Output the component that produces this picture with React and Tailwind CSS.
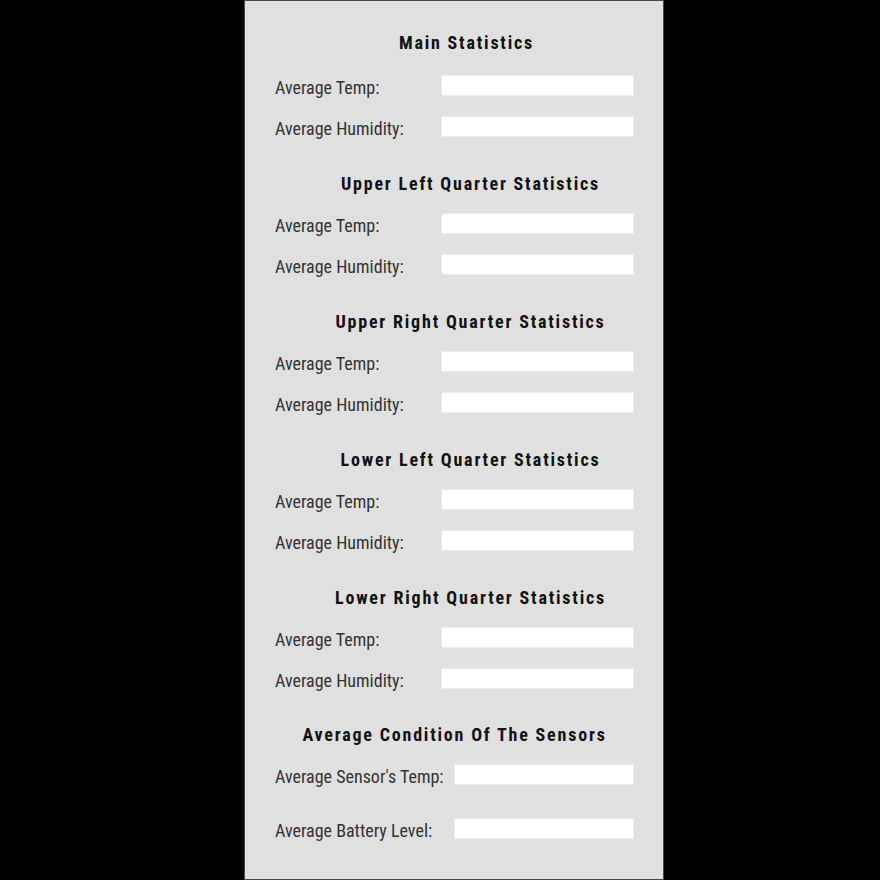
import React from 'react';

const sections = [
  { title: 'Main Statistics', shift: 'pl-[24px]', top: 'mb-[20px]' },
  { title: 'Upper Left Quarter Statistics', shift: 'pl-[32px]', top: 'mb-[17px]' },
  { title: 'Upper Right Quarter Statistics', shift: 'pl-[32px]', top: 'mb-[17px]' },
  { title: 'Lower Left Quarter Statistics', shift: 'pl-[32px]', top: 'mb-[17px]' },
  { title: 'Lower Right Quarter Statistics', shift: 'pl-[32px]', top: 'mb-[17px]' },
];

const Field = ({ label, wide = true }) => (
  <div className="flex items-center justify-between h-[21px]">
    <span className="pt-[4px] text-[18px] text-[#333] font-stretch-condensed leading-none">{label}</span>
    <input
      type="text"
      readOnly
      className={`${wide ? 'w-[193px]' : 'w-[180px]'} h-[21px] bg-white border border-[#ececec] outline-none`}
    />
  </div>
);

const App = () => {
  return (
    <div className="w-[880px] h-[880px] bg-black overflow-hidden" style={{ fontFamily: 'Roboto, "Liberation Sans", sans-serif' }}>
      <div className="ml-[244px] w-[420px] h-[880px] bg-[#e0e0e0] border border-[#4a4a4a] pt-[30px] pl-[30px] pr-[29px]">
        {sections.map((s, i) => (
          <div key={s.title} className={i === 0 ? '' : 'mt-[35px]'}>
            <h2 className={`h-6 leading-6 text-center text-[18px] font-bold tracking-[1.8px] text-[#111] font-stretch-condensed ${s.shift} ${s.top}`}>
              {s.title}
            </h2>
            <div className="flex flex-col gap-[20px]">
              <Field label="Average Temp:" />
              <Field label="Average Humidity:" />
            </div>
          </div>
        ))}

        {/* Sensors */}
        <div className="mt-[34px]">
          <h2 className="h-6 leading-6 text-center text-[18px] font-bold tracking-[1.8px] text-[#111] font-stretch-condensed mb-[17px]">
            Average Condition Of The Sensors
          </h2>
          <div className="flex flex-col gap-[33px]">
            <Field label="Average Sensor's Temp:" wide={false} />
            <Field label="Average Battery Level:" wide={false} />
          </div>
        </div>
      </div>
    </div>
  );
};

export default App;
